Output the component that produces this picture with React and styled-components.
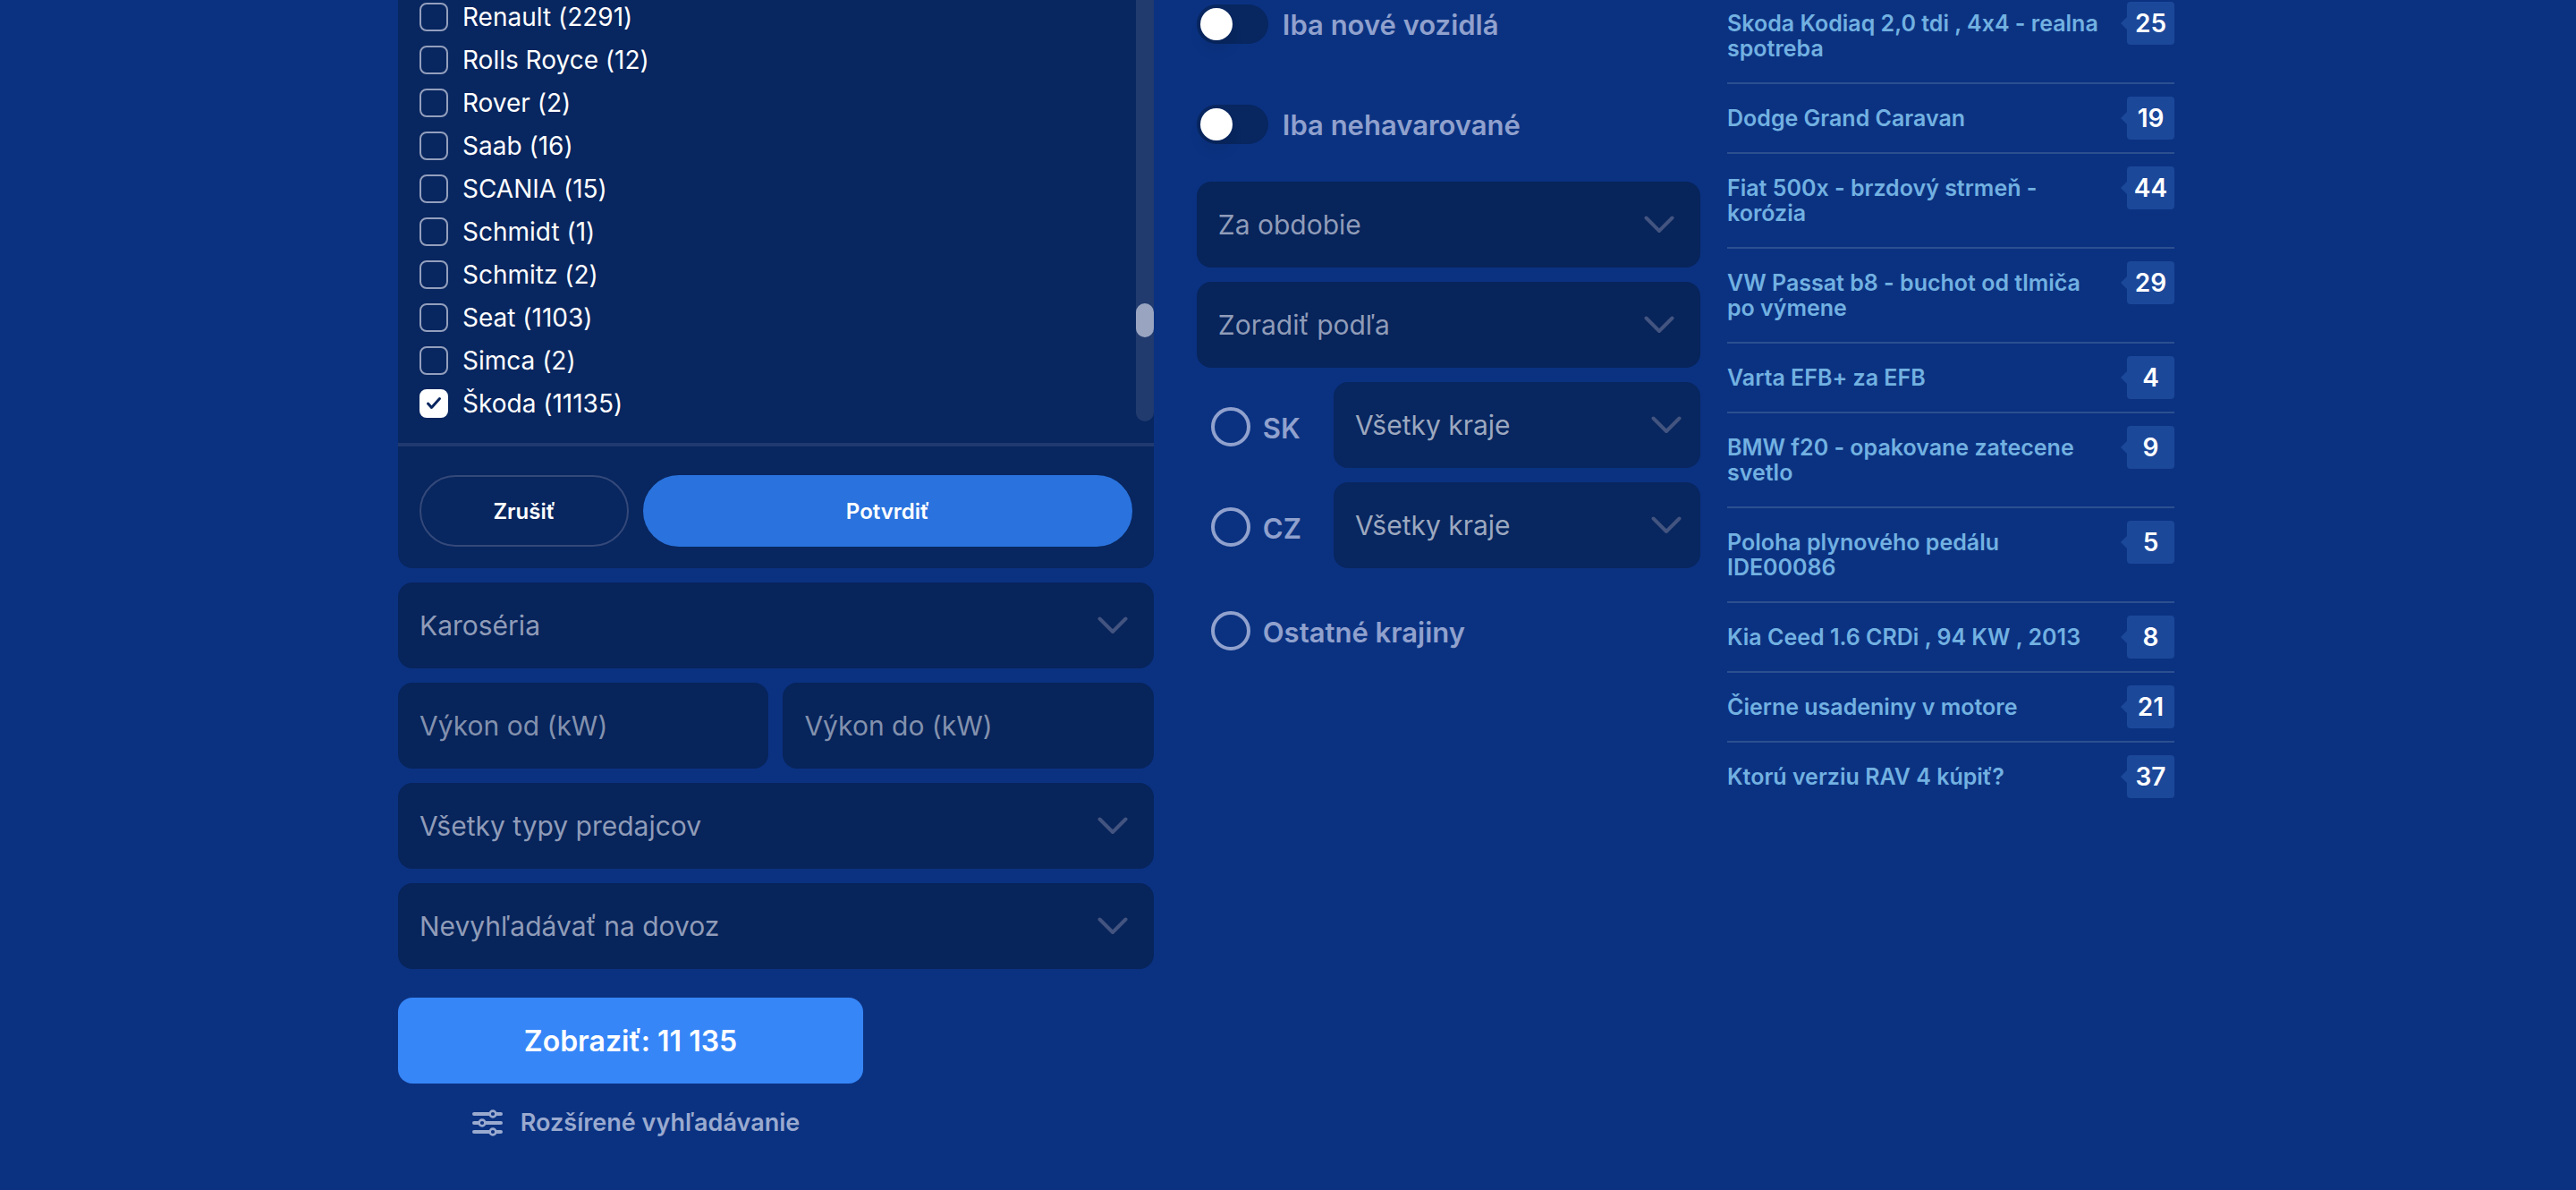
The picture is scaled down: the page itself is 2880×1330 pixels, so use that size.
import React, { useState } from "react";
import styled, { createGlobalStyle } from "styled-components";

const GlobalStyle = createGlobalStyle`
  *, *::before, *::after { box-sizing: border-box; }
  body {
    margin: 0;
    background: #0b3281;
    color: #fff;
    font-family: Inter, "Liberation Sans", sans-serif;
    font-size: 30px;
    font-feature-settings: "calt" 0;
    -webkit-font-smoothing: antialiased;
  }
  button, input, select { font: inherit; color: inherit; }
`;

const Page = styled.div`
  min-height: 100vh;
  overflow: hidden;
`;

const Container = styled.div`
  display: grid;
  grid-template-columns: minmax(0, 1fr) 500px;
  gap: 30px;
  align-items: start;
  max-width: 1990px;
  margin: 0 auto;
  padding-right: 4px;
`;

const SearchForm = styled.form`
  display: grid;
  grid-template-columns: minmax(0, 3fr) minmax(0, 2fr);
  gap: 48px;
  align-items: start;
`;

const Column = styled.div`
  display: flex;
  flex-direction: column;
  gap: 16px;
`;

const BrandPanel = styled.fieldset`
  margin: 0;
  padding: 0;
  border: 0;
  min-width: 0;
  background: #08265f;
  border-radius: 0 0 16px 16px;
`;

const BrandScroller = styled.div`
  display: flex;
  justify-content: space-between;
  padding-bottom: 24px;
`;

const BrandList = styled.ul`
  list-style: none;
  display: flex;
  flex-direction: column;
  gap: 16px;
  margin: 0;
  padding: 3px 24px 4px;
`;

const CheckLabel = styled.label`
  display: flex;
  align-items: center;
  gap: 16px;
  height: 32px;
  font-size: 28px;
  line-height: 32px;
  white-space: nowrap;
  cursor: pointer;
`;

const CheckBox = styled.span`
  display: grid;
  place-items: center;
  width: 32px;
  height: 32px;
  > * { grid-area: 1 / 1; }
  svg { pointer-events: none; }
`;

const CheckInput = styled.input`
  appearance: none;
  width: 32px;
  height: 32px;
  margin: 0;
  border: 2px solid #939fbd;
  border-radius: 8px;
  &:checked { background: #fff; border-color: #fff; }
`;

const ScrollTrack = styled.div`
  display: flex;
  flex-direction: column;
  justify-content: flex-end;
  width: 20px;
  padding-bottom: 94px;
  border-radius: 0 0 10px 10px;
  background: #213b6f;
`;

const ScrollThumb = styled.div`
  height: 38px;
  border-radius: 10px;
  background: #99a4c1;
`;

const PanelActions = styled.div`
  display: grid;
  grid-template-columns: 3fr 7fr;
  gap: 16px;
  padding: 32px 24px 24px;
  border-top: 4px solid #203a6f;
`;

const PillButton = styled.button`
  height: 80px;
  border: 2px solid ${(p) => (p.$primary ? "#2a73de" : "#34497a")};
  border-radius: 40px;
  background: ${(p) => (p.$primary ? "#2a73de" : "transparent")};
  font-size: 24px;
  font-weight: 600;
  cursor: pointer;
`;

const SelectBox = styled.div`
  display: grid;
  align-items: center;
  flex: ${(p) => (p.$compact ? "0 0 410px" : "none")};
  > * { grid-area: 1 / 1; }
  svg {
    justify-self: end;
    margin-right: ${(p) => (p.$compact ? "20px" : "28px")};
    pointer-events: none;
  }
`;

const fieldBackground = (p) => (p.$light ? "#08265f" : "#07245b");

const SelectInput = styled.select`
  appearance: none;
  width: 100%;
  height: 96px;
  padding: 0 72px 0 24px;
  border: 0;
  border-radius: 16px;
  background: ${fieldBackground};
  color: ${(p) => (p.$light ? "#9ca8bf" : "#909cb8")};
`;

const TextInput = styled.input`
  width: 100%;
  min-width: 0;
  height: 96px;
  padding: 0 24px;
  border: 0;
  border-radius: 16px;
  background: ${fieldBackground};
  &::placeholder { color: #8391ad; opacity: 1; }
`;

const FieldPair = styled.div`
  display: grid;
  grid-template-columns: 1fr 1fr;
  gap: 16px;
`;

const SubmitArea = styled.div`
  display: flex;
  flex-direction: column;
  align-items: center;
  gap: 28px;
  width: 520px;
  max-width: 100%;
  padding-top: 16px;
`;

const SubmitButton = styled.button`
  width: 100%;
  height: 96px;
  border: 0;
  border-radius: 16px;
  background: #3686f8;
  font-size: 32px;
  font-weight: 600;
  cursor: pointer;
`;

const AdvancedLink = styled.a`
  display: flex;
  align-items: center;
  gap: 20px;
  padding-left: 12px;
  color: #9aaacf;
  font-size: 27px;
  font-weight: 600;
  line-height: 32px;
  text-decoration: none;
`;

const ToggleRow = styled.label`
  display: flex;
  align-items: center;
  gap: 16px;
  height: 96px;
  color: #90a1cd;
  font-size: 31px;
  font-weight: 600;
  cursor: pointer;
`;

const Toggles = styled.div`
  display: flex;
  flex-direction: column;
  gap: 16px;
  margin-top: -21px;
`;

const ToggleInput = styled.input`
  appearance: none;
  display: flex;
  width: 80px;
  height: 44px;
  margin: 0;
  padding: 4px;
  border-radius: 22px;
  background: #08265f;
  &::before {
    content: "";
    width: 36px;
    height: 36px;
    border-radius: 50%;
    background: #fff;
    box-shadow: 0 12px 16px rgba(0, 0, 0, 0.06);
  }
  &:checked { justify-content: flex-end; background: #3686f8; }
`;

const CountryRow = styled.div`
  display: flex;
  align-items: center;
  justify-content: space-between;
  height: 96px;
  padding-left: 16px;
`;

const Countries = styled.div`
  display: grid;
  gap: 16px;
`;

const RadioLabel = styled.label`
  display: flex;
  align-items: center;
  gap: 14px;
  padding-top: 4px;
  color: #90a1cd;
  font-size: 31px;
  font-weight: 600;
  line-height: 44px;
  white-space: nowrap;
  cursor: pointer;
`;

const RadioText = styled.span`
  padding-top: 4px;
`;

const RadioInput = styled.input`
  appearance: none;
  width: 44px;
  height: 44px;
  margin: 0;
  border: 4px solid #90a1cd;
  border-radius: 50%;
  &:checked { background: #90a1cd; }
`;

const OtherCountries = styled.div`
  padding: 26px 0 0 16px;
`;

const TopicList = styled.ul`
  list-style: none;
  margin: -12px 0 0;
  padding: 0;
`;

const TopicItem = styled.li`
  display: grid;
  grid-template-columns: minmax(0, 1fr) 53px;
  gap: 27px;
  & + & { border-top: 2px solid #2c4f90; }
`;

const TopicLink = styled.a`
  padding: 24px 0;
  color: #72b1e1;
  font-size: 25px;
  font-weight: 600;
  line-height: 28px;
  text-decoration: none;
`;

const ReplyCount = styled.a`
  position: relative;
  height: 48px;
  margin-top: 14px;
  border-radius: 4px;
  background: #1c489a;
  color: #fff;
  font-size: 28px;
  font-weight: 600;
  line-height: 48px;
  text-align: center;
  text-decoration: none;
  &::before {
    content: "";
    position: absolute;
    right: 100%;
    top: 17px;
    border: 7px solid transparent;
    border-left-width: 0;
    border-right-color: #1c489a;
  }
`;

const BRANDS = [
  ["Renault", 2291],
  ["Rolls Royce", 12],
  ["Rover", 2],
  ["Saab", 16],
  ["SCANIA", 15],
  ["Schmidt", 1],
  ["Schmitz", 2],
  ["Seat", 1103],
  ["Simca", 2],
  ["Škoda", 11135],
];

const TOPICS = [
  ["Skoda Kodiaq 2,0 tdi , 4x4 - realna spotreba", 25],
  ["Dodge Grand Caravan", 19],
  ["Fiat 500x - brzdový strmeň - korózia", 44],
  ["VW Passat b8 - buchot od tlmiča po výmene", 29],
  ["Varta EFB+ za EFB", 4],
  ["BMW f20 - opakovane zatecene svetlo", 9],
  ["Poloha plynového pedálu IDE00086", 5],
  ["Kia Ceed 1.6 CRDi , 94 KW , 2013", 8],
  ["Čierne usadeniny v motore", 21],
  ["Ktorú verziu RAV 4 kúpiť?", 37],
];

const Chevron = () => (
  <svg width="36" height="20" viewBox="0 0 36 20" fill="none" stroke="#42547f" strokeWidth="4" strokeLinecap="round" strokeLinejoin="round" aria-hidden="true">
    <path d="M3.500 2.500 18 17 32.500 2.500" />
  </svg>
);

const CheckMark = () => (
  <svg width="32" height="32" viewBox="0 0 32 32" fill="none" stroke="#08265f" strokeWidth="3" strokeLinecap="round" strokeLinejoin="round" aria-hidden="true">
    <path d="M9.5 16 13.500 20.500 22.500 10.500" />
  </svg>
);

const SlidersIcon = () => (
  <svg width="34" height="30" viewBox="0 0 34 30" fill="none" stroke="currentColor" strokeWidth="4" strokeLinecap="round" aria-hidden="true">
    <path d="M2 5h17M27 5h5M2 15h5M15 15h17M2 25h17M27 25h5" />
    <circle cx="23" cy="5" r="3.400" strokeWidth="2.600" />
    <circle cx="11" cy="15" r="3.400" strokeWidth="2.600" />
    <circle cx="23" cy="25" r="3.400" strokeWidth="2.600" />
  </svg>
);

function Select({ label, name, compact }) {
  return (
    <SelectBox $compact={compact}>
      <SelectInput $light={compact} name={name} aria-label={label}>
        <option>{label}</option>
      </SelectInput>
      <Chevron />
    </SelectBox>
  );
}

function Brand({ name, count }) {
  const [checked, setChecked] = useState(name === "Škoda");
  return (
    <li>
      <CheckLabel>
        <CheckBox>
          <CheckInput type="checkbox" name="brand" checked={checked} onChange={() => setChecked(!checked)} />
          {checked && <CheckMark />}
        </CheckBox>
        {`${name} (${count})`}
      </CheckLabel>
    </li>
  );
}

function Country({ code }) {
  return (
    <CountryRow>
      <RadioLabel>
        <RadioInput type="radio" name="country" value={code} />
        <RadioText>{code}</RadioText>
      </RadioLabel>
      <Select compact label="Všetky kraje" name={`region-${code}`} />
    </CountryRow>
  );
}

export default function App() {
  return (
    <Page>
      <GlobalStyle />
      <Container>
        <SearchForm onSubmit={(e) => e.preventDefault()}>
          <Column>
            <BrandPanel>
              <BrandScroller>
                <BrandList>
                  {BRANDS.map(([name, count]) => (
                    <Brand key={name} name={name} count={count} />
                  ))}
                </BrandList>
                <ScrollTrack>
                  <ScrollThumb />
                </ScrollTrack>
              </BrandScroller>
              <PanelActions>
                <PillButton type="button">Zrušiť</PillButton>
                <PillButton type="button" $primary>Potvrdiť</PillButton>
              </PanelActions>
            </BrandPanel>
            <Select label="Karoséria" name="body" />
            <FieldPair>
              <TextInput name="power-from" aria-label="Výkon od (kW)" placeholder="Výkon od (kW)" />
              <TextInput name="power-to" aria-label="Výkon do (kW)" placeholder="Výkon do (kW)" />
            </FieldPair>
            <Select label="Všetky typy predajcov" name="seller" />
            <Select label="Nevyhľadávať na dovoz" name="import" />
            <SubmitArea>
              <SubmitButton type="submit">Zobraziť: 11 135</SubmitButton>
              <AdvancedLink href="#rozsirene">
                <SlidersIcon />
                Rozšírené vyhľadávanie
              </AdvancedLink>
            </SubmitArea>
          </Column>
          <Column>
            <Toggles>
              <ToggleRow>
                <ToggleInput type="checkbox" role="switch" name="only-new" />
                Iba nové vozidlá
              </ToggleRow>
              <ToggleRow>
                <ToggleInput type="checkbox" role="switch" name="not-crashed" />
                Iba nehavarované
              </ToggleRow>
            </Toggles>
            <Select label="Za obdobie" name="period" />
            <Select label="Zoradiť podľa" name="sort" />
            <Countries>
              <Country code="SK" />
              <Country code="CZ" />
              <OtherCountries>
                <RadioLabel>
                  <RadioInput type="radio" name="country" value="other" />
                  <RadioText>Ostatné krajiny</RadioText>
                </RadioLabel>
              </OtherCountries>
            </Countries>
          </Column>
        </SearchForm>
        <TopicList>
          {TOPICS.map(([title, replies]) => (
            <TopicItem key={title}>
              <TopicLink href="#forum">{title}</TopicLink>
              <ReplyCount href="#forum">{replies}</ReplyCount>
            </TopicItem>
          ))}
        </TopicList>
      </Container>
    </Page>
  );
}
